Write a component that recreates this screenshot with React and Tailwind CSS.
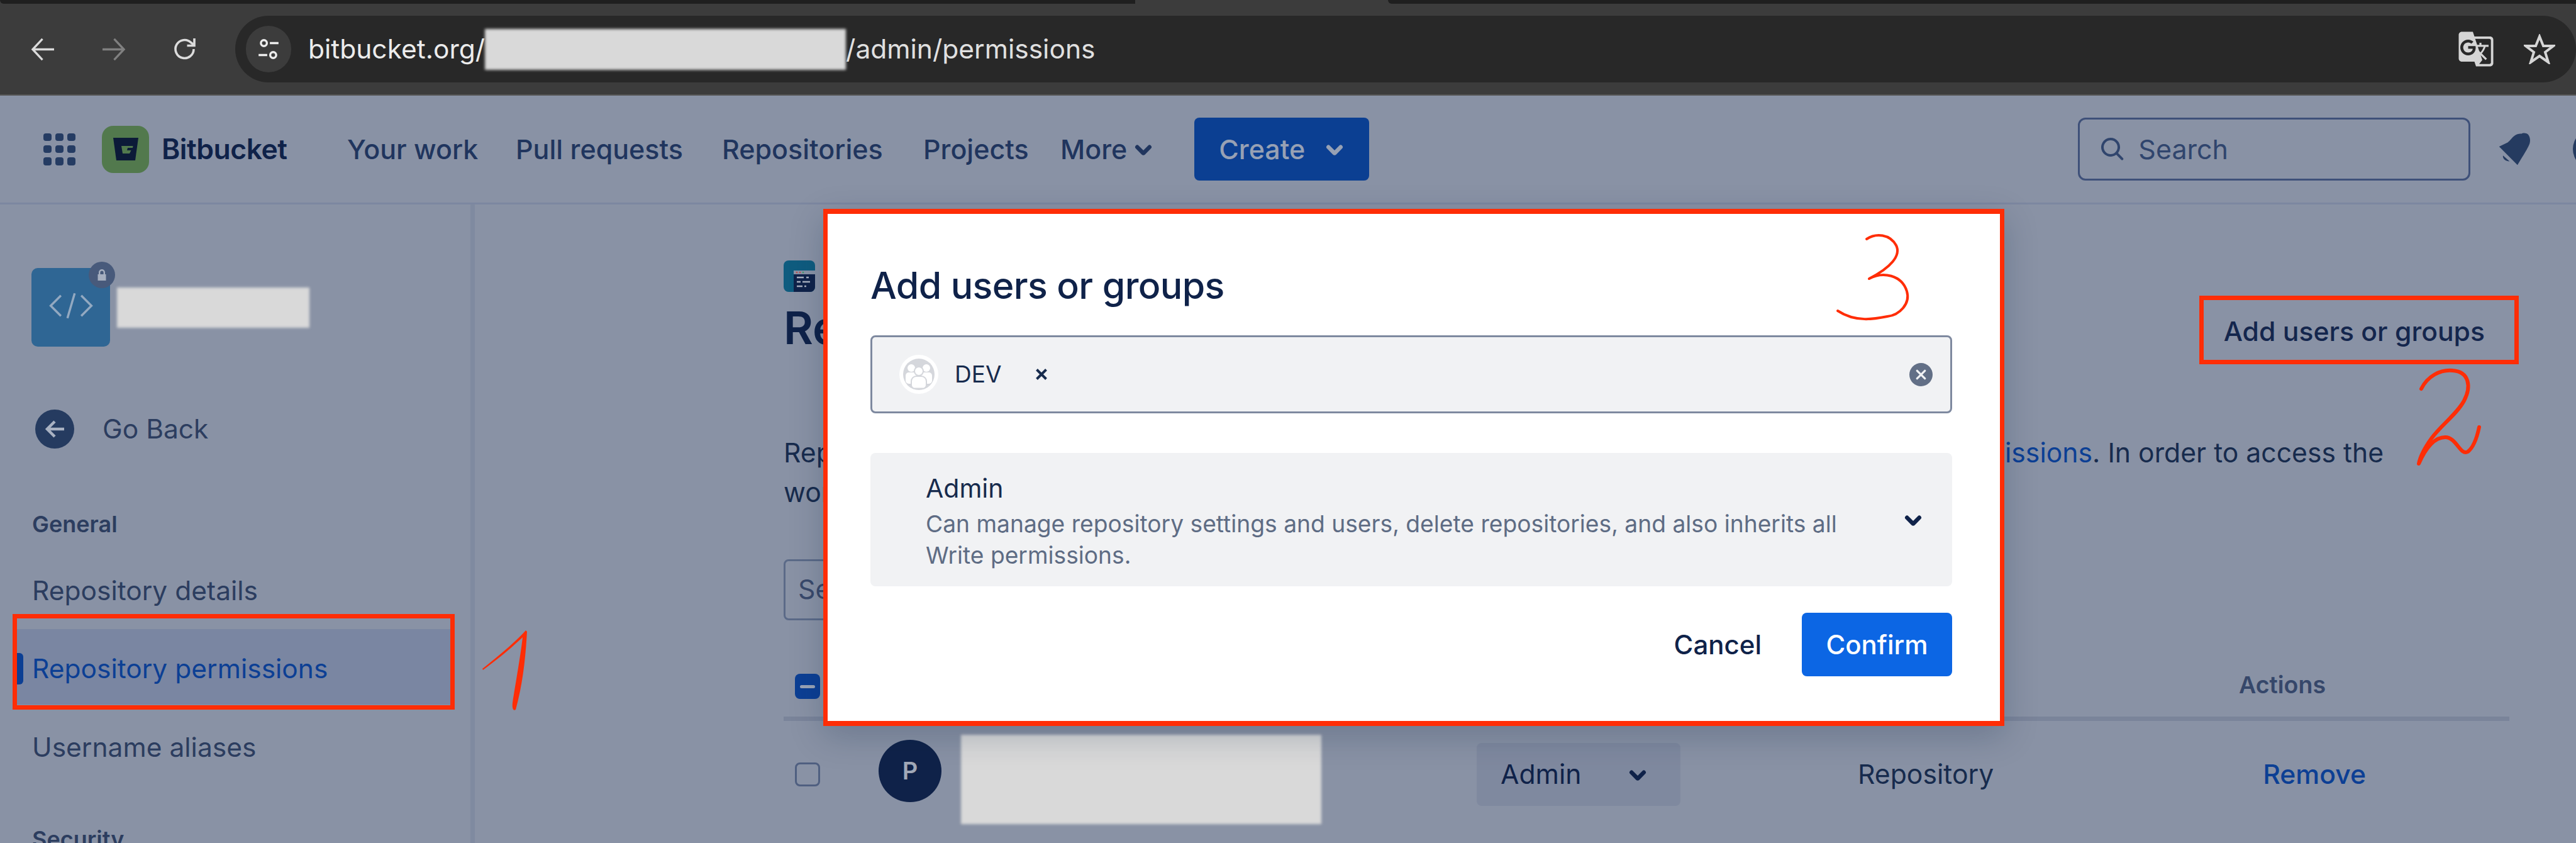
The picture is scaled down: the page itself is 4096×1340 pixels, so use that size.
import { MdGTranslate } from 'react-icons/md';

const navLinks = [
    { label: 'Your work', width: 'w-[268px]' },
    { label: 'Pull requests', width: 'w-[328px]' },
    { label: 'Repositories', width: 'w-[320px]' },
    { label: 'Projects', width: 'w-[218px]' },
];

function Chevron({ className }) {
    return (
        <svg viewBox="0 0 24 24" fill="currentColor" className={className}>
            <path d="M8.292 10.293a1.009 1.009 0 000 1.419l2.939 2.965c.218.215.5.322.779.322s.556-.107.769-.322l2.93-2.955a1.01 1.01 0 000-1.419.987.987 0 00-1.406 0l-2.298 2.317-2.307-2.327a.99.99 0 00-1.406 0z" />
        </svg>
    );
}

function Redacted({ className }) {
    return <div className={`shrink-0 bg-[#d9d9d9] blur-[2px] ${className}`} />;
}

function BrowserBar() {
    return (
        <div className="relative h-[152px] shrink-0 border-b-2 border-[#565656] bg-[#3c3c3c] px-0 pt-[25px]">
            <div className="absolute left-0 top-0 h-[6px] w-[1805px] rounded-bl-[6px] bg-[#1f1f1f]" />
            <div className="absolute right-0 top-0 h-[6px] w-[1889px] rounded-bl-[6px] bg-[#1f1f1f]" />
            <div className="flex h-[106px] items-center">
                <div className="flex w-[374px] shrink-0 items-center text-[#dcdcdc]">
                    <svg viewBox="0 0 40 38" fill="none" stroke="currentColor" strokeWidth="3.4" className="ml-[49px] h-[37px] w-[39px]">
                        <path d="M38 19H4M19 2L3 19l16 17" />
                    </svg>
                    <svg viewBox="0 0 40 38" fill="none" stroke="#808080" strokeWidth="3.4" className="ml-[73px] h-[37px] w-[39px]">
                        <path d="M2 19h34M21 2l16 17-16 17" />
                    </svg>
                    <svg viewBox="0 0 40 40" fill="none" stroke="currentColor" strokeWidth="3.6" className="ml-[74px] h-[40px] w-[40px]">
                        <path d="M34 20a14.5 14.5 0 11-4.5-10.5L35 14" />
                        <path d="M35 3v11.5H23.5" />
                    </svg>
                </div>
                <div className="flex h-[106px] flex-1 items-center rounded-l-[53px] rounded-r-[53px] bg-[#282828] pl-[17px]">
                    <div className="flex h-[74px] w-[72px] shrink-0 items-center justify-center rounded-full bg-[#3c3c3c]">
                        <svg viewBox="0 0 36 36" fill="none" stroke="#ededed" strokeWidth="3.2" className="h-[38px] w-[38px]">
                            <circle cx="11" cy="9" r="4.5" />
                            <path d="M20 9h13M3 27h13" />
                            <circle cx="25" cy="27" r="4.5" />
                        </svg>
                    </div>
                    <span className="ml-[27px] text-[42.5px] text-[#ececec]">bitbucket.org/</span>
                    <Redacted className="h-[65px] w-[574px]" />
                    <span className="text-[42.5px] text-[#e0e0e0]">/admin/permissions</span>
                    <MdGTranslate className="ml-auto text-[60px] text-[#d5d5d5]" />
                    <svg viewBox="0 0 50 48" fill="none" stroke="#d5d5d5" strokeWidth="4" strokeLinejoin="miter" className="ml-[46px] mr-[33px] h-[48px] w-[50px]">
                        <path d="M25 4l6 15h16L34 29l5 16-14-10-14 10 5-16L3 19h16z" />
                    </svg>
                </div>
            </div>
        </div>
    );
}

function TopNav() {
    return (
        <header className="flex h-[173px] shrink-0 items-center border-b-[3px] border-[#7c87a0] pl-[69px] text-[43px] font-medium text-[#20355e]">
            <div className="grid h-[51px] w-[51px] shrink-0 grid-cols-3 gap-[6.5px]">
                {Array.from({ length: 9 }).map((_, i) => (
                    <span key={i} className="rounded-[4px] bg-[#253c63]" />
                ))}
            </div>
            <div className="ml-[42px] flex h-[75px] w-[75px] shrink-0 items-center justify-center rounded-[18px] bg-[#52794d]">
                <svg viewBox="0 0 40 36" className="h-[36px] w-[40px]">
                    <path d="M0 0h40l-5 36H5z" fill="#0c1a38" />
                    <path d="M13 13l2 12h11l2.5-5H22l1-4h8l.5-3z" fill="#52794d" />
                </svg>
            </div>
            <span className="ml-[20px] w-[295px] shrink-0 text-[44.5px] font-semibold tracking-[-0.5px] text-[#0f2249]">Bitbucket</span>
            {navLinks.map((link) => (
                <span key={link.label} className={`${link.width} shrink-0`}>{link.label}</span>
            ))}
            <span className="shrink-0">More</span>
            <Chevron className="ml-[-13px] h-[78px] w-[78px] shrink-0 text-[#20355e]" />
            <button className="ml-[42px] flex h-[100px] w-[278px] shrink-0 items-center rounded-[8px] bg-[#0b3f92] pl-[39px] text-[#97a1b4]">
                Create
                <Chevron className="ml-[8px] h-[78px] w-[78px] shrink-0" />
            </button>
            <div className="ml-[1127px] flex h-[100px] w-[624px] shrink-0 items-center rounded-[12px] border-[3px] border-[#3e5079] pl-[28px] text-[#30456d]">
                <svg viewBox="0 0 24 24" fill="currentColor" className="h-[48px] w-[48px]">
                    <path d="M16.436 15.085l3.94 4.01a1 1 0 01-1.425 1.402l-3.938-4.006a7.5 7.5 0 111.423-1.406zM10.5 16a5.5 5.5 0 100-11 5.5 5.5 0 000 11z" />
                </svg>
                <span className="ml-[17px] font-normal">Search</span>
            </div>
            <svg viewBox="45 65 200 200" fill="#253b60" className="ml-[45px] h-[52px] w-[52px] shrink-0">
                <path d="M48 150l52-25c15-12 28-32 42-42 14-10 30-14 44-12 10-8 36-2 42 8 8 12 12 30 7 50-8 26-30 58-75 133z" />
                <path d="M72 204c-4 14 10 36 40 36z" />
            </svg>
            <div className="ml-[66px] h-[64px] w-[64px] shrink-0 rounded-full bg-[#253b60]" />
        </header>
    );
}

function SideNav() {
    return (
        <aside className="h-full w-[755px] shrink-0 border-r-[7px] border-[#7f8aa0] pt-[101px] text-[42.5px] text-[#2c3d5f]">
            <div className="ml-[50px] flex items-center">
                <div className="relative flex h-[125px] w-[125px] shrink-0 items-center justify-center rounded-[10px] bg-[#2f6694]">
                    <svg viewBox="0 0 64 40" fill="none" stroke="#93a9c1" strokeWidth="3" className="mb-[6px] h-[50px] w-[74px]">
                        <path d="M18 6L4 20l14 14M46 6l14 14-14 14M37 3l-10 34" />
                    </svg>
                    <div className="absolute right-[-8px] top-[-10px] flex h-[42px] w-[42px] items-center justify-center rounded-full bg-[#485a7b]">
                        <svg viewBox="0 0 16 18" fill="#a6afc0" className="h-[18px] w-[16px]">
                            <path d="M3 8V5a5 5 0 0110 0v3h1.5v10h-13V8zm2.4 0h5.2V5a2.6 2.6 0 00-5.2 0z" />
                        </svg>
                    </div>
                </div>
                <Redacted className="ml-[11px] h-[64px] w-[306px]" />
            </div>

            <div className="ml-[56px] mt-[100px] flex items-center">
                <div className="flex h-[62px] w-[62px] items-center justify-center rounded-full bg-[#253b60]">
                    <svg viewBox="0 0 24 24" fill="none" stroke="#a9b2c2" strokeWidth="3" className="h-[36px] w-[36px]">
                        <path d="M22 12H4M12 4l-8 8 8 8" />
                    </svg>
                </div>
                <span className="ml-[45px] h-[48px] leading-[48px]">Go Back</span>
            </div>

            <div className="ml-[51px] mt-[96px] h-[48px] text-[36px] font-semibold leading-[48px]">General</div>
            <div className="ml-[51px] mt-[58px] h-[48px] leading-[48px]">Repository details</div>
            <div className="relative ml-[26px] mt-[37px] flex h-[120px] w-[692px] items-center bg-[#7a86a2] pl-[25px] pt-[6px] text-[#0c3f94]">
                <span className="absolute left-0 top-[38px] h-[50px] w-[11px] rounded-r-[6px] bg-[#0c3f94]" />
                Repository permissions
            </div>
            <div className="ml-[51px] mt-[44px] h-[48px] leading-[48px]">Username aliases</div>
            <div className="ml-[51px] mt-[98px] h-[48px] text-[36px] font-semibold leading-[48px]">Security</div>
        </aside>
    );
}

function RepoPermissions() {
    return (
        <main className="box-content w-[2744px] shrink-0 pl-[491px] pt-[89px] text-[42.7px] text-[#172b4d]">
            <svg viewBox="0 0 50 50" className="h-[50px] w-[50px]">
                <rect width="50" height="50" rx="8" fill="#0f5c7f" />
                <path d="M16 16h34v26a8 8 0 01-8 8H16z" fill="#0f2249" />
                <path d="M16 16h34v6H16z" fill="#8a93a6" />
                <circle cx="21" cy="19" r="1.3" fill="#c0504d" />
                <circle cx="26" cy="19" r="1.3" fill="#c0504d" />
                <circle cx="31" cy="19" r="1.3" fill="#3f9b6b" />
                <path d="M21 27h11M36 27h4M21 34h6M30 34h12M21 41h9M33 41h3" stroke="#a8b0c0" strokeWidth="2.4" />
            </svg>

            <div className="mt-[17px] flex h-[80px] items-start justify-between">
                <h1 className="mt-[10px] text-[72px] font-semibold leading-[60px] text-[#0f2249]">Repository permissions</h1>
                <span className="mr-[39px] pt-[22px] font-medium leading-[48px] text-[#14264d]">Add users or groups</span>
            </div>

            <div className="mt-[127px] leading-[63px]">
                <p className="flex whitespace-nowrap">
                    <span className="w-[1942px] overflow-hidden">Repository permissions</span>
                    <span><span className="text-[#0c3f94]">issions</span>. In order to access the</span>
                </p>
                <p>workspace</p>
            </div>

            <div className="mt-[75px] flex h-[97px] w-[500px] items-center rounded-[8px] border-[3px] border-[#5b6a88] pl-[20px] text-[#39496b]">Search</div>

            <div className="flex h-[160px] items-end border-b-[7px] border-[#7a849a] pb-[26px]">
                <span className="mb-[2px] ml-[18px] flex h-[40px] w-[40px] items-center justify-center rounded-[8px] bg-[#0c3f94]">
                    <span className="h-[5px] w-[24px] rounded-full bg-[#9aa4b6]" />
                </span>
                <span className="ml-[2256px] text-[37.5px] font-semibold leading-[48px] text-[#36476a]">Actions</span>
            </div>

            <div className="flex h-[190px] items-start pt-[22px]">
                <span className="ml-[18px] mt-[44px] h-[38px] w-[40px] shrink-0 rounded-[8px] border-[3px] border-[#4f5f80]" />
                <div className="ml-[93px] mt-[8px] flex h-[99px] w-[100px] shrink-0 items-center justify-center rounded-full bg-[#0f2249] text-[38px] font-semibold text-[#a1a9b8]">P</div>
                <Redacted className="ml-[31px] h-[142px] w-[573px]" />
                <div className="ml-[247px] mt-[13px] flex h-[100px] w-[324px] shrink-0 items-center rounded-[8px] bg-[#7f899f] pl-[38px] text-[#0f2249]">
                    Admin
                    <Chevron className="ml-[50px] h-[78px] w-[78px] shrink-0" />
                </div>
                <span className="ml-[282px] mt-[38px] shrink-0 leading-[50px]">Repository</span>
                <span className="ml-[428px] mt-[38px] shrink-0 font-medium leading-[50px] text-[#0c3f94]">Remove</span>
            </div>
        </main>
    );
}

function GroupAvatar() {
    return (
        <svg viewBox="0 0 62 62" className="h-[62px] w-[62px] shrink-0">
            <circle cx="31" cy="31" r="31" fill="#ffffff" />
            <circle cx="31" cy="31" r="25" fill="#d5d7dc" />
            <circle cx="19" cy="21" r="6" fill="#ffffff" />
            <circle cx="43" cy="21" r="6" fill="#ffffff" />
            <path d="M10 33a5 5 0 015-5h32a5 5 0 015 5v8a5 5 0 01-5 5H15a5 5 0 01-5-5z" fill="#ffffff" />
            <circle cx="31" cy="26" r="7" fill="#ffffff" stroke="#d5d7dc" strokeWidth="2" />
            <path d="M19 42a8 8 0 018-8h8a8 8 0 018 8v6a6 6 0 01-4 5.5H23a6 6 0 01-4-5.5z" fill="#ffffff" stroke="#d5d7dc" strokeWidth="2" />
        </svg>
    );
}

function AddUsersModal() {
    return (
        <div className="absolute left-[1309px] top-[332px] flex h-[822px] w-[1878px] flex-col border-x-[7px] border-y-[8px] border-[#ff2d06] bg-white pl-[68px] pr-[76px] pt-[76px] text-[#172b4d] shadow-[0_16px_50px_rgba(9,30,66,0.22)]">
            <h2 className="h-[76px] text-[59px] font-medium leading-[76px] tracking-[-0.6px] text-[#0f2249]">Add users or groups</h2>

            <div className="mt-[41px] flex h-[124px] shrink-0 items-center rounded-[8px] border-[3px] border-[#7e899f] bg-[#f1f2f4] pl-[43px] pr-[28px]">
                <GroupAvatar />
                <span className="ml-[26px] text-[37px]">DEV</span>
                <svg viewBox="0 0 16 16" fill="none" stroke="#172b4d" strokeWidth="3.2" className="ml-[54px] h-[20px] w-[20px]">
                    <path d="M2 2l12 12M14 2L2 14" />
                </svg>
                <svg viewBox="0 0 36 36" className="ml-auto h-[37px] w-[37px]">
                    <circle cx="18" cy="18" r="18" fill="#626f86" />
                    <path d="M12 12l12 12M24 12L12 24" stroke="#f1f2f4" strokeWidth="3.2" strokeLinecap="round" />
                </svg>
            </div>

            <div className="mt-[63px] flex h-[212px] shrink-0 items-center justify-between rounded-[8px] bg-[#f1f2f4] pl-[88px] pr-[23px]">
                <div className="pt-[6px]">
                    <div className="text-[41px] leading-[50px]">Admin</div>
                    <p className="mt-[7px] whitespace-nowrap text-[37.2px] leading-[50px] text-[#5e6c84]">
                        Can manage repository settings and users, delete repositories, and also inherits all
                        <br />
                        Write permissions.
                    </p>
                </div>
                <Chevron className="h-[78px] w-[78px] shrink-0 text-[#0f2249]" />
            </div>

            <div className="mt-[42px] flex justify-end">
                <button className="mr-[64px] text-[42px] font-medium text-[#0f2249]">Cancel</button>
                <button className="flex h-[101px] w-[239px] items-center justify-center rounded-[8px] bg-[#0c66e4] text-[42px] font-medium text-white">Confirm</button>
            </div>
        </div>
    );
}

function Annotations() {
    return (
        <>
            <div className="absolute left-[20px] top-[976px] h-[152px] w-[703px] border-[7px] border-[#ff2d06]" />
            <div className="absolute left-[3497px] top-[470px] h-[109px] w-[508px] border-[7px] border-[#ff2d06]" />
            <svg viewBox="0 0 85 140" fill="#ff2d06" className="absolute left-[760px] top-[995px] h-[140px] w-[85px]">
                <path d="M7 68C30 50 58 27 76 7l2 2c-2 36-6 81-18 124-4 3-6-3-5-11 5-32 13-77 16-104C52 36 30 54 8 70z" />
            </svg>
            <svg viewBox="0 0 125 145" fill="none" stroke="#ff2d06" strokeWidth="4" strokeLinecap="round" strokeLinejoin="round" className="absolute left-[2915px] top-[370px] h-[145px] w-[125px]">
                <path d="M53 10C68 0 90 2 100 20c8 16-8 35-43 53 22-12 52-6 60 20 6 20-12 38-31 40-20 4-50 10-79-9" />
            </svg>
            <svg viewBox="0 0 108 160" fill="none" stroke="#ff2d06" strokeWidth="6" strokeLinecap="round" strokeLinejoin="round" className="absolute left-[3840px] top-[583px] h-[160px] w-[108px]">
                <path d="M10 35C20 15 40 4 60 6c26 2 30 25 18 48-12 22-36 38-52 60-10 14-18 30-20 40 8-18 22-42 42-42 18 0 24 30 36 23 8-6 14-20 18-39" />
            </svg>
        </>
    );
}

export default function App() {
    return (
        <div className="relative flex h-[1340px] w-[4096px] flex-col overflow-hidden bg-[#8992a5] [font-family:Inter,'Liberation_Sans',sans-serif]">
            <BrowserBar />
            <TopNav />
            <div className="flex min-h-0 flex-1">
                <SideNav />
                <RepoPermissions />
            </div>
            <AddUsersModal />
            <Annotations />
        </div>
    );
}
